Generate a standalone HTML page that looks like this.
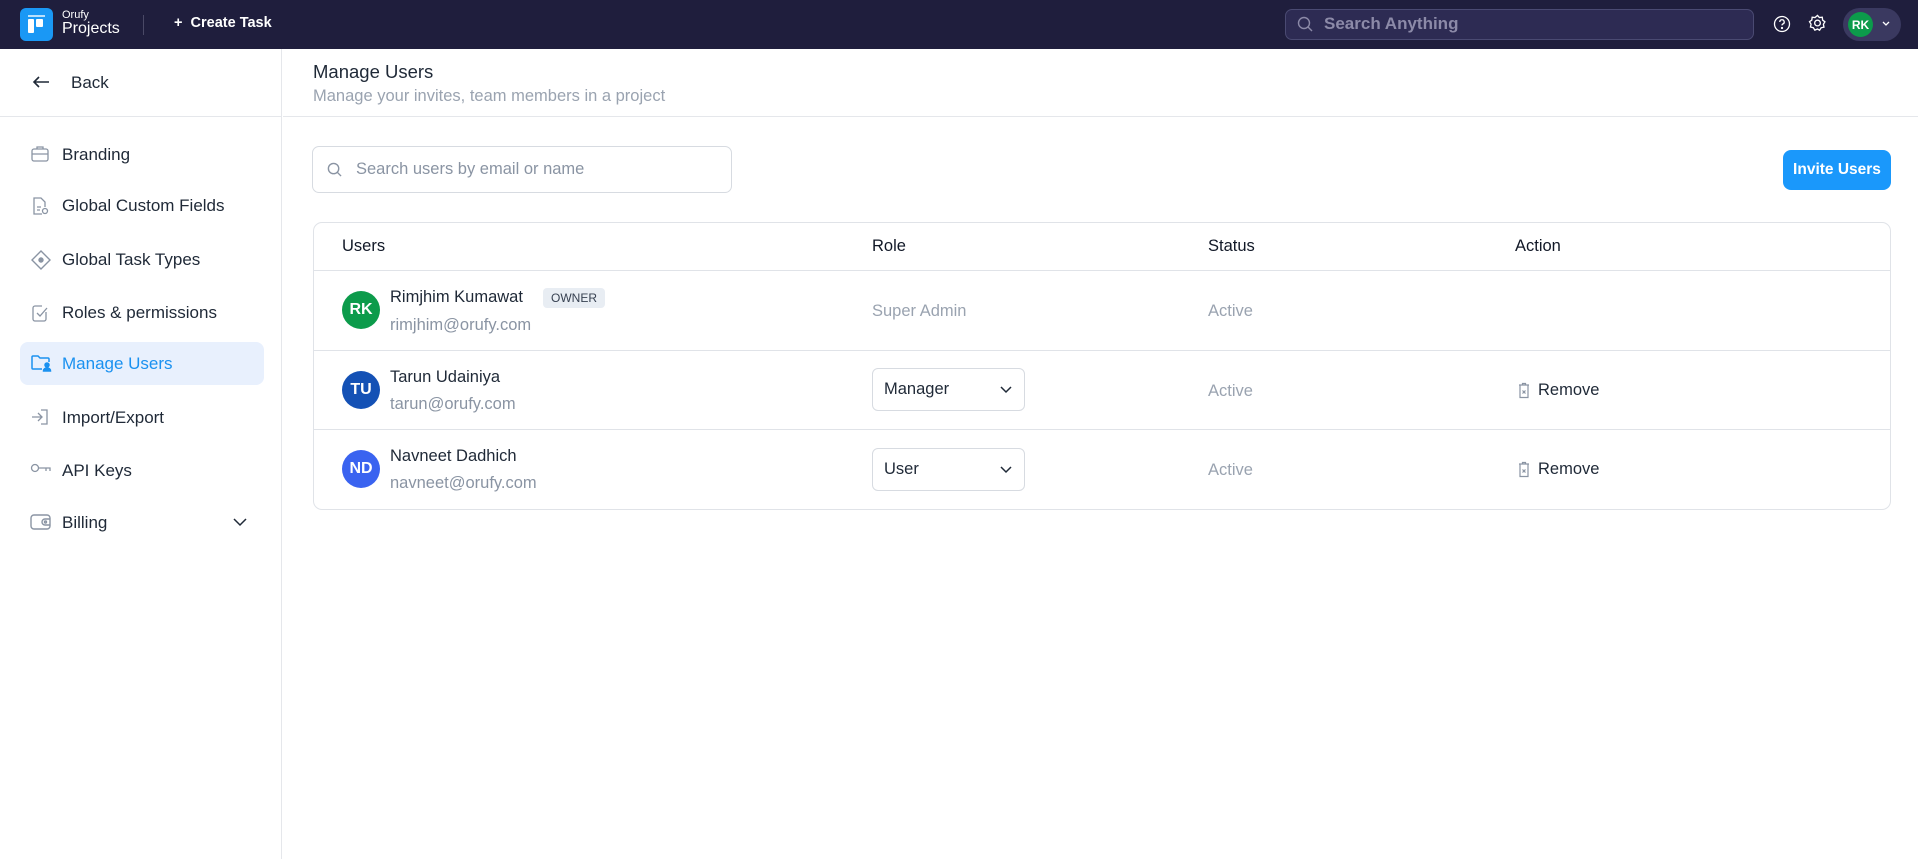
<!DOCTYPE html>
<html><head><meta charset="utf-8"><style>
*{box-sizing:border-box;margin:0;padding:0}
body{width:1918px;height:859px;overflow:hidden;background:#fff;font-family:"Liberation Sans",sans-serif;color:#1f2937;position:relative}
.abs{position:absolute}
.top{left:0;top:0;width:1918px;height:49px;background:#1f1e3d}
.side{left:0;top:49px;width:282px;height:810px;border-right:1px solid #e5e7eb}
.item{position:absolute;left:20px;width:244px;height:43px;border-radius:8px;display:flex;align-items:center;padding-left:42px;font-size:17px;color:#1f2937}
.item svg{position:absolute;left:10px;top:12px}
.item.act{background:#e8f0fd;color:#1a91f0}
.th{top:223px;height:47px;line-height:47px;font-size:16.5px;color:#111827}
.av{width:38px;height:38px;border-radius:50%;color:#fff;font-weight:bold;font-size:16px;display:flex;align-items:center;justify-content:center}
.nm{font-size:16.5px;color:#1f2937}
.em{font-size:16.5px;color:#8a94a3}
.gr{font-size:16.5px;color:#9aa3b0}
.sel{width:153px;height:43px;border:1px solid #d7dbe1;border-radius:6px;font-size:16.5px;padding:0 11px;display:flex;align-items:center;justify-content:space-between}
.rm{font-size:16.5px;display:flex;align-items:center;gap:8px}
</style></head><body>
<div class="abs top"></div>
<div class="abs" style="left:20px;top:8px;width:33px;height:33px;border-radius:6px;background:#1a98f5">
<div class="abs" style="left:8px;top:7px;width:17px;height:2px;background:#fff;opacity:.7"></div>
<div class="abs" style="left:8px;top:11px;width:6px;height:14px;background:#fff;border-radius:1px"></div>
<div class="abs" style="left:16px;top:11px;width:7px;height:8px;background:#fff;border-radius:1px"></div></div>
<div class="abs" style="left:62px;top:9px;color:#fff;font-size:11px">Orufy</div>
<div class="abs" style="left:62px;top:20px;color:#fff;font-size:16px">Projects</div>
<div class="abs" style="left:143px;top:15px;width:1px;height:20px;background:#4a4966"></div>
<div class="abs" style="left:174px;top:15px;color:#fff;font-size:14.5px;font-weight:bold">+&nbsp; Create Task</div>
<div class="abs" style="left:1285px;top:9px;width:469px;height:31px;border:1px solid #4a4a72;border-radius:7px;background:#2d2b53"></div>
<svg class="abs" style="left:1297px;top:16px" width="16" height="16" viewBox="0 0 16 16" fill="none" stroke="#8c8aa8" stroke-width="1.4"><circle cx="7" cy="7" r="5.5"/><path d="M11 11l4 4"/></svg>
<div class="abs" style="left:1324px;top:14px;color:#8c8aa8;font-size:17px;font-weight:bold">Search Anything</div>
<svg class="abs" style="left:1773px;top:15px" width="18" height="18" viewBox="0 0 18 18" fill="none" stroke="#fff" stroke-width="1.3"><circle cx="9" cy="9" r="7.5"/><path d="M6.8 7a2.2 2.2 0 1 1 3 2c-.6.3-.8.7-.8 1.4"/><circle cx="9" cy="13" r=".5" fill="#fff"/></svg>
<svg class="abs" style="left:1808px;top:14px" width="19" height="19" viewBox="0 0 20 20" fill="none" stroke="#fff" stroke-width="1.4"><path d="M10 1.5l2 2.2 3-.3.4 3 2.4 1.8-1.6 2.6.6 3-3 .7-1.6 2.6L10 15.8 7.2 17l-1.6-2.6-3-.7.6-3L1.6 8.1 4 6.4l.4-3 3 .3z"/><circle cx="10" cy="9.5" r="3"/></svg>
<div class="abs" style="left:1843px;top:8px;width:58px;height:33px;border-radius:17px;background:#3a3960"></div>
<div class="abs av" style="left:1848px;top:12px;width:25px;height:25px;background:#0c9b4b;font-size:12px">RK</div>
<svg class="abs" style="left:1881px;top:20px" width="10" height="8" viewBox="0 0 10 8" fill="none" stroke="#fff" stroke-width="1.3"><path d="M2 2l3 3 3-3"/></svg>

<div class="abs side"></div>
<svg class="abs" style="left:31px;top:74px" width="20" height="16" viewBox="0 0 20 16" fill="none" stroke="#1f2937" stroke-width="1.6"><path d="M18 8H3M8 3L3 8l5 5"/></svg>
<div class="abs" style="left:71px;top:73px;font-size:17px">Back</div>
<div class="abs" style="left:0;top:116px;width:282px;height:1px;background:#e5e7eb"></div>

<div class="item" style="top:133px"><svg width="20" height="18" viewBox="0 0 20 18" fill="none" stroke="#8a94a3" stroke-width="1.3"><rect x="2" y="4" width="16" height="12" rx="2"/><path d="M7 4V2h6v2M2 9h16"/></svg>Branding</div>
<div class="item" style="top:184px"><svg width="20" height="20" viewBox="0 0 20 20" fill="none" stroke="#8a94a3" stroke-width="1.3"><path d="M12 18H4V2h7l4 4v5"/><path d="M7 11h4M7 14h3"/><circle cx="15" cy="15" r="2.5"/></svg>Global Custom Fields</div>
<div class="item" style="top:238px"><svg width="22" height="20" viewBox="0 0 22 20" fill="none" stroke="#8a94a3" stroke-width="1.4"><path d="M11 1l9 9-9 9-9-9z"/><circle cx="11" cy="10" r="2" fill="#8a94a3"/></svg>Global Task Types</div>
<div class="item" style="top:291px"><svg width="20" height="20" viewBox="0 0 20 20" fill="none" stroke="#8a94a3" stroke-width="1.3"><path d="M16 9v7a2 2 0 0 1-2 2H5a2 2 0 0 1-2-2V5a2 2 0 0 1 2-2h7"/><path d="M7 10l3 3 7-8"/></svg>Roles &amp; permissions</div>
<div class="item act" style="top:342px"><svg width="22" height="18" viewBox="0 0 22 18" fill="none" stroke="#1a91f0" stroke-width="1.5"><path d="M12 15H3a1 1 0 0 1-1-1V3a1 1 0 0 1 1-1h5l2 2h8a1 1 0 0 1 1 1v3"/><circle cx="17" cy="11" r="2" fill="#1a91f0"/><path d="M13.5 17c0-2 1.6-3 3.5-3s3.5 1 3.5 3z" fill="#1a91f0"/></svg>Manage Users</div>
<div class="item" style="top:396px"><svg width="20" height="18" viewBox="0 0 20 18" fill="none" stroke="#8a94a3" stroke-width="1.3"><path d="M11 2h6v14h-6M2 9h10M8 5l4 4-4 4"/></svg>Import/Export</div>
<div class="item" style="top:449px"><svg width="22" height="14" viewBox="0 0 22 14" fill="none" stroke="#8a94a3" stroke-width="1.3"><circle cx="5" cy="7" r="3.5"/><path d="M8.5 7H20v3M16 7v3"/></svg>API Keys</div>
<div class="item" style="top:501px"><svg width="22" height="18" viewBox="0 0 22 18" fill="none" stroke="#8a94a3" stroke-width="1.4"><rect x="1" y="2" width="19" height="14" rx="3"/><path d="M20 6h-5a3 3 0 0 0 0 6h5"/><circle cx="15.5" cy="9" r="1"/></svg>Billing
<svg style="position:absolute;left:212px;top:16px" width="16" height="10" viewBox="0 0 16 10" fill="none" stroke="#1f2937" stroke-width="1.5"><path d="M2 2l6 6 6-6"/></svg></div>

<div class="abs" style="left:313px;top:61px;font-size:18.5px;color:#1f2937">Manage Users</div>
<div class="abs" style="left:313px;top:87px;font-size:16.5px;color:#9aa3b0">Manage your invites, team members in a project</div>
<div class="abs" style="left:283px;top:116px;width:1635px;height:1px;background:#e5e7eb"></div>

<div class="abs" style="left:312px;top:146px;width:420px;height:47px;border:1px solid #d7dbe1;border-radius:7px"></div>
<svg class="abs" style="left:327px;top:162px" width="15" height="15" viewBox="0 0 16 16" fill="none" stroke="#8a94a3" stroke-width="1.5"><circle cx="7" cy="7" r="5.5"/><path d="M11 11l4 4"/></svg>
<div class="abs" style="left:356px;top:160px;font-size:16.5px;color:#8a94a3">Search users by email or name</div>
<div class="abs" style="left:1783px;top:150px;width:108px;height:40px;border-radius:8px;background:#1a98fb;color:#fff;font-size:15.5px;font-weight:bold;display:flex;align-items:center;justify-content:center">Invite Users</div>

<div class="abs" style="left:313px;top:222px;width:1578px;height:288px;border:1px solid #e0e3e8;border-radius:9px"></div>
<div class="abs" style="left:314px;top:270px;width:1576px;height:1px;background:#e0e3e8"></div>
<div class="abs" style="left:314px;top:350px;width:1576px;height:1px;background:#e0e3e8"></div>
<div class="abs" style="left:314px;top:429px;width:1576px;height:1px;background:#e0e3e8"></div>
<div class="abs th" style="left:342px">Users</div>
<div class="abs th" style="left:872px">Role</div>
<div class="abs th" style="left:1208px">Status</div>
<div class="abs th" style="left:1515px">Action</div>

<div class="abs av" style="left:342px;top:291px;background:#0c9b4b">RK</div>
<div class="abs nm" style="left:390px;top:288px">Rimjhim Kumawat</div>
<div class="abs" style="left:543px;top:288px;background:#e8edf3;border-radius:4px;padding:3px 8px;font-size:12px;color:#374151">OWNER</div>
<div class="abs em" style="left:390px;top:316px">rimjhim@orufy.com</div>
<div class="abs gr" style="left:872px;top:302px">Super Admin</div>
<div class="abs gr" style="left:1208px;top:302px">Active</div>

<div class="abs av" style="left:342px;top:371px;background:#1451b5">TU</div>
<div class="abs nm" style="left:390px;top:368px">Tarun Udainiya</div>
<div class="abs em" style="left:390px;top:395px">tarun@orufy.com</div>
<div class="abs sel" style="left:872px;top:368px">Manager<svg width="14" height="9" viewBox="0 0 14 9" fill="none" stroke="#1f2937" stroke-width="1.5"><path d="M2 2l5 5 5-5"/></svg></div>
<div class="abs gr" style="left:1208px;top:382px">Active</div>
<div class="abs rm" style="left:1518px;top:381px"><svg width="12" height="17" viewBox="0 0 12 17" fill="none" stroke="#8a94a3" stroke-width="1.2"><path d="M1 3h10M4.5 3V1.5h3V3M2 3v12.5h8V3"/><path d="M4.5 8.5l3 3M7.5 8.5l-3 3"/></svg>Remove</div>

<div class="abs av" style="left:342px;top:450px;background:#3a63f0">ND</div>
<div class="abs nm" style="left:390px;top:447px">Navneet Dadhich</div>
<div class="abs em" style="left:390px;top:474px">navneet@orufy.com</div>
<div class="abs sel" style="left:872px;top:448px">User<svg width="14" height="9" viewBox="0 0 14 9" fill="none" stroke="#1f2937" stroke-width="1.5"><path d="M2 2l5 5 5-5"/></svg></div>
<div class="abs gr" style="left:1208px;top:461px">Active</div>
<div class="abs rm" style="left:1518px;top:460px"><svg width="12" height="17" viewBox="0 0 12 17" fill="none" stroke="#8a94a3" stroke-width="1.2"><path d="M1 3h10M4.5 3V1.5h3V3M2 3v12.5h8V3"/><path d="M4.5 8.5l3 3M7.5 8.5l-3 3"/></svg>Remove</div>
</body></html>
